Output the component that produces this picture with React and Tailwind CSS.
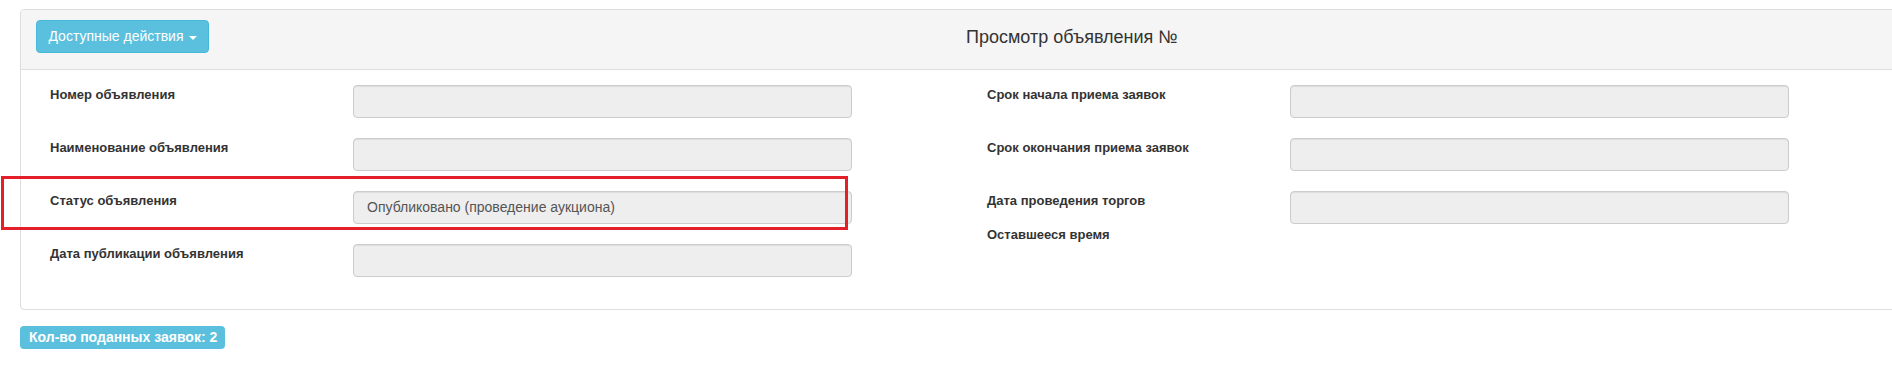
import React from "react";

const font = { fontFamily: '"Liberation Sans", Arial, sans-serif' };

function Field({ label, value, extra }) {
  return (
    <div className="flex items-start h-[33px]">
      <div className="w-[303px] shrink-0 text-[13px] leading-[18px] font-bold text-[#333] pt-[1px]">
        {label}
        {extra}
      </div>
      <div className="w-[499px] h-[33px] shrink-0 rounded-[4px] border border-[#ccc] bg-[#eee] shadow-[inset_0_1px_1px_rgba(0,0,0,0.075)] flex items-center pl-[13px] text-[14px] text-[#555]">
        {value}
      </div>
    </div>
  );
}

export default function App() {
  return (
    <div className="relative w-[1892px] h-[369px] overflow-hidden bg-white" style={font}>
      <div className="pt-[9px] pl-[20px]">
        <div className="w-[2104px] border border-[#ddd] rounded-[4px] bg-white">
          <div className="h-[60px] bg-[#f5f5f5] border-b border-[#ddd] pt-[10px] px-[15px] flex items-start rounded-t-[4px]">
            <button className="h-[33px] w-[173px] rounded-[4px] bg-[#5bc0de] border border-[#46b8da] text-white text-[14px] flex items-center justify-center gap-[5px]">
              <span>Доступные действия</span>
              <span className="inline-block w-0 h-0 border-t-[4px] border-t-white border-x-[4px] border-x-transparent mt-[2px]"></span>
            </button>
            <div className="ml-[757px] mt-[7px] text-[18px] leading-[20px] text-[#333]">
              Просмотр объявления №
            </div>
          </div>
          <div className="pt-[15px] pb-[32px] pl-[29px] flex">
            <div className="w-[937px] shrink-0 flex flex-col gap-[20px]">
              <Field label="Номер объявления" />
              <Field label="Наименование объявления" />
              <Field label="Статус объявления" value="Опубликовано (проведение аукциона)" />
              <Field label="Дата публикации объявления" />
            </div>
            <div className="flex flex-col gap-[20px]">
              <Field label="Срок начала приема заявок" />
              <Field label="Срок окончания приема заявок" />
              <Field
                label="Дата проведения торгов"
                extra={<div className="mt-[16px]">Оставшееся время</div>}
              />
            </div>
          </div>
        </div>
        <div className="mt-[16px] inline-flex items-center h-[23px] w-[205px] rounded-[4px] bg-[#5bc0de] text-white font-bold text-[14px] pl-[9px]">
          Кол-во поданных заявок: 2
        </div>
      </div>
      <div className="absolute left-[1px] top-[176px] w-[847px] h-[54px] border-[3px] border-[#e3202a] pointer-events-none"></div>
    </div>
  );
}
